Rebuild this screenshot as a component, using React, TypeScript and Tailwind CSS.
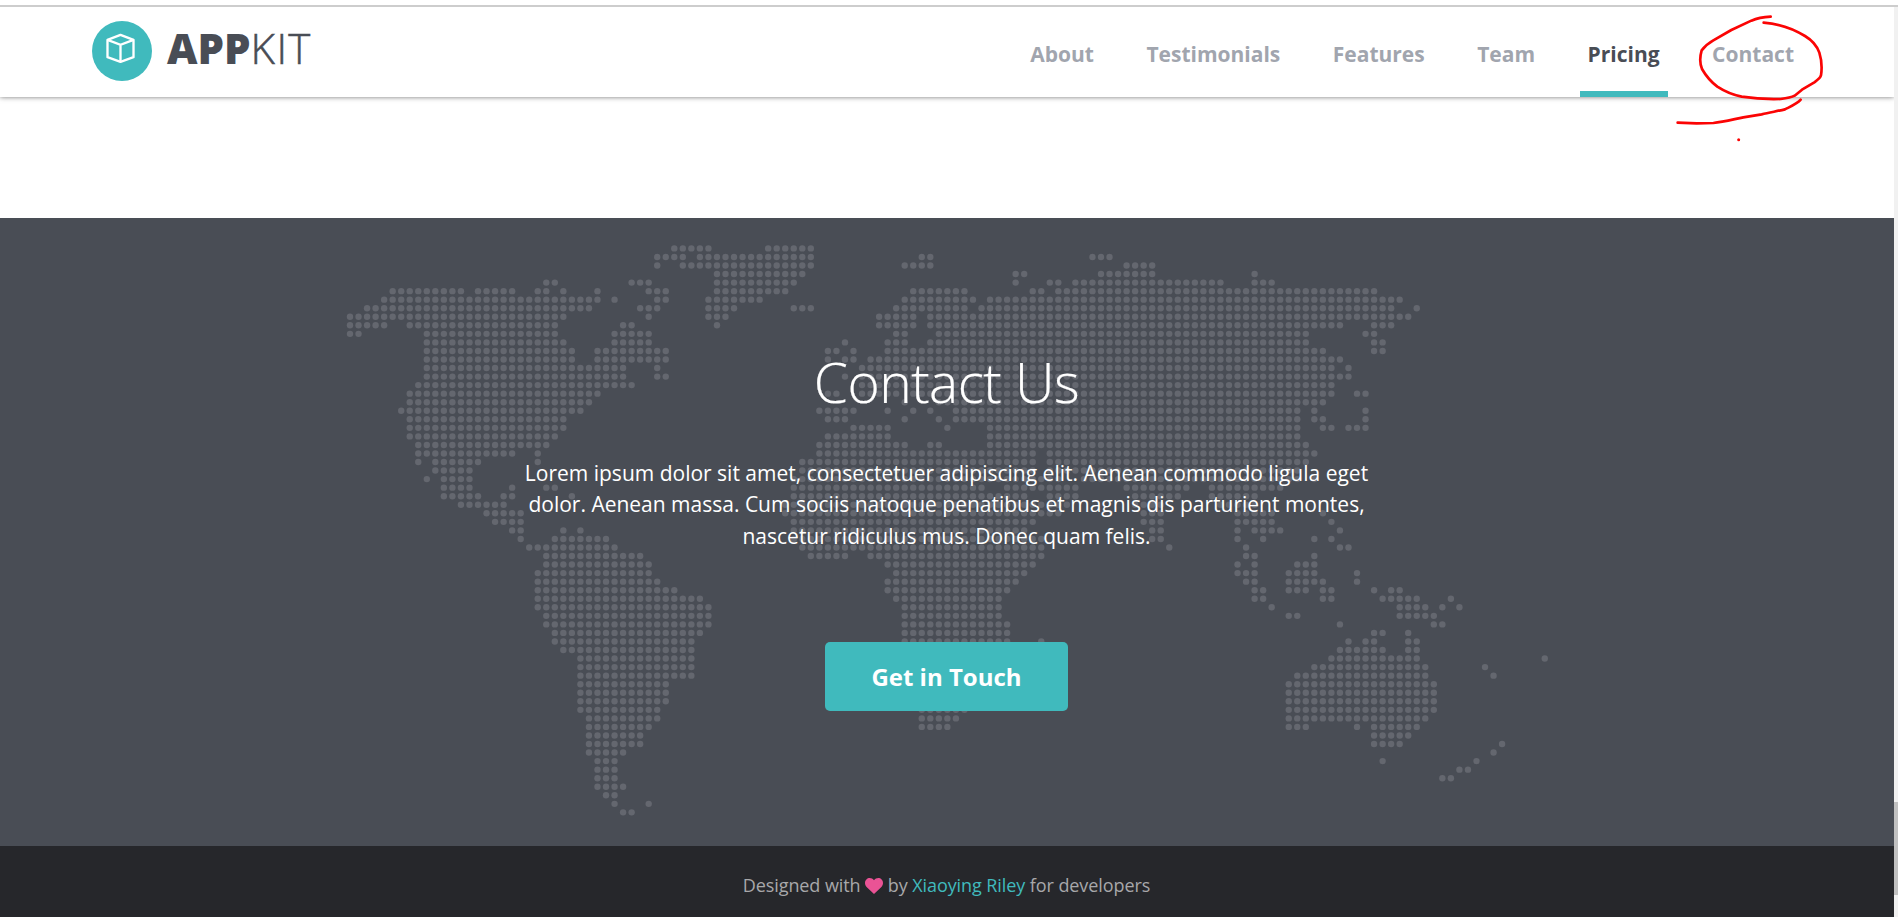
import React from "react";

const MAP_ROWS = [
  "38-42,49-54",
  "36-39,41-54,67-68,87-89",
  "36,39-54,65-68,91-94",
  "43-53,78-79,88-94,106",
  "23-24,33-35,43-52,78,82-83,85-102,106-108",
  "5-13,15-19,22-23,25,29,35-37,43-51,66-72,80-81,83-120",
  "4-29,31,36-37,42-48,65-73,75-123",
  "2-28,34-36,42-45,52-54,64-72,74-122,125",
  "0-25,35,42-44,62-66,68-124",
  "0-4,7-24,32-33,43,62-66,68-116,120-122",
  "0-1,9-24,31-35,64-65,69-112,119-120",
  "9-25,31-35,58,63-65,68-112,120-121",
  "9-26,29-37,56-57,59,63-114,120-121",
  "9-26,29-37,56,58-59,61-116",
  "9-32,36,60-115,117",
  "9-32,36-37,58,60-117",
  "8-33,60-115",
  "7-29,56-57,60-64,66-115,118-119",
  "7-28,65,69-114",
  "6-27,55-59,63,66,68,71-111,113,119",
  "7-25,56-58,65,69,71-111,113-114,119",
  "7-25,59-63,70,75-111,114-115,117-119",
  "7-24,56-63,75-111",
  "8-23,55-65,68-69,75-112",
  "8-19,22,55-80,82-113",
  "8,10-15,22,53-80,82-112",
  "10-14,53-80,82-111",
  "9,11-14,52-83,86-111,113",
  "11-14,19,23-24,52-74,77-85,91-98,101-109",
  "11-15,18-19,26,52-79,82-85,92-97,101-106",
  "13-18,51-84,92-95,102-106",
  "16-20,51-83,93-95,104-108,114",
  "17-20,52-80,93-95,104-108,115",
  "19-20,25,27,52-79,94-95,104,106-109,116",
  "20,24-30,52-81,94-95,104,107,113,115",
  "21-31,53-81,96,105,116-117",
  "23-34,54-58,61-81,105-106,113",
  "23-35,63-80,104,106,111-113",
  "22-35,64-79,104-106,110-113,118",
  "22-36,63-78,105-106,110-114,118",
  "22-38,63-77,106-107,110-112,114-115,120,122-123",
  "22-41,64-76,106-107,114-115,121-125,129",
  "22-42,65-76,108,123-126,128,130",
  "23-42,65-76,110-111,123-127",
  "23-42,65-77,116,127-128",
  "24-41,65-77,120-121,124",
  "24-40,65-77,81,117,119-120,124-125",
  "25-40,65-77,116-121,124-125",
  "27-40,66-76,115-125,140",
  "27-40,66-75,113-126,133",
  "27-40,66-75,111-126,134",
  "27-37,66-74,110-127",
  "27-37,66-74,110-127",
  "27-37,67-73,110-127",
  "27-36,67-72,110-127",
  "28-36,67-71,110-126",
  "28-35,67-70,110-112,118,120-125",
  "28-34,120-124",
  "28-34,120-123,135",
  "28-32,134",
  "29-31,121,132",
  "29-31,130-131",
  "29-31,128-129",
  "29-32",
  "30-31",
  "31,35",
  "32-33",
];

const dots = MAP_ROWS.flatMap((row, r) =>
  row.split(",").flatMap((span) => {
    const [from, to = from] = span.split("-").map(Number);
    return Array.from({ length: to - from + 1 }, (_, i) => ({ c: from + i, r }));
  }),
);

function WorldMap() {
  return (
    <svg
      viewBox="0 0 1894 628"
      className="col-start-1 row-start-1 h-[628px] w-[1894px]"
      fill="#64676f"
      aria-hidden="true"
    >
      {dots.map(({ c, r }) => (
        <circle key={`${c}-${r}`} cx={350 + c * 8.534} cy={30.4 + r * 8.545} r="3.2" />
      ))}
    </svg>
  );
}

function Logo() {
  return (
    <a className="flex items-start gap-[15px] text-[#494d55]">
      <span className="flex size-[60px] justify-center rounded-full bg-[#40babd]">
        <svg viewBox="0 0 90 90" className="mt-[10.5px] -ml-[3px] size-[33px]" fill="none" stroke="#fff" strokeWidth="7">
          <g transform="translate(45 45) scale(.91) translate(-45 -45)">
            <path d="M45 4 84 19V71L45 85 6 71V19Z" strokeLinejoin="round" />
            <path d="M6 19 45 34 84 19M45 34V85" />
          </g>
        </svg>
      </span>
      <span className="-mt-px text-[42px] leading-[56px]">
        <span className="font-extrabold">APP</span>
        <span className="font-light tracking-[1.4px] [-webkit-text-stroke:0.5px_#494d55]">KIT</span>
      </span>
    </a>
  );
}

const NAV = ["About", "Testimonials", "Features", "Team", "Pricing", "Contact"];

function Header() {
  return (
    <header className="relative flex h-[90px] justify-between bg-white pr-[92px] pl-[92px] shadow-[0_0_5px_rgba(0,0,0,0.55)]">
      <div className="pt-[14px]">
        <Logo />
      </div>
      <nav className="flex gap-[36.5px] text-[21px] font-bold">
        {NAV.map((item) => (
          <a
            key={item}
            className={
              item === "Pricing"
                ? "border-b-6 border-[#40babd] px-2 pt-[32px] leading-[30px] text-[#494d55]"
                : "px-2 pt-[32px] leading-[30px] text-[#a1a5ae]"
            }
          >
            {item}
          </a>
        ))}
      </nav>
    </header>
  );
}

function Contact() {
  return (
    <section className="grid h-[628px] overflow-hidden bg-[#494d55]">
      <WorldMap />
      <div className="z-10 col-start-1 row-start-1 flex flex-col items-center pr-px text-center text-white">
        <h2 className="mt-[126px] text-[55px] leading-[76px] font-light tracking-[-0.5px] [-webkit-text-stroke:0.2px_#fff]">
          Contact Us
        </h2>
        <p className="mt-[38px] text-[21px] leading-[31.4px] whitespace-nowrap">
          Lorem ipsum dolor sit amet, consectetuer adipiscing elit. Aenean commodo ligula eget
          <br />
          dolor. Aenean massa. Cum sociis natoque penatibus et magnis dis parturient montes,
          <br />
          nascetur ridiculus mus. Donec quam felis.
        </p>
        <button className="mt-[90px] h-[69px] w-[243px] rounded-[5px] bg-[#40babd] pt-px text-[24px] font-bold">
          Get in Touch
        </button>
      </div>
    </section>
  );
}

function Footer() {
  return (
    <footer className="flex h-[71px] items-start justify-center bg-[#26272b] pt-[25px] pr-px text-[18px] leading-[28px] tracking-[-0.08px] whitespace-pre text-[#a8a8aa]">
      <span>Designed with </span>
      <svg viewBox="0 0 18 16" className="mt-[7px] h-[16px] w-[18px]" fill="#ea5395">
        <path d="M9 16 1.6 8.9C-.6 6.600-.4 3.200 1.400 1.400 3.500-.6 7-.4 9 2.300 11-.4 14.500-.6 16.600 1.400c1.800 1.800 2 5.200-.2 7.500Z" />
      </svg>
      <span> by </span>
      <a className="text-[#40babd]">Xiaoying Riley</a>
      <span> for developers</span>
    </footer>
  );
}

function PenMarks() {
  return (
    <svg
      viewBox="0 0 1074 450"
      className="pointer-events-none absolute top-0 left-[1540px] z-20 h-[150px] w-[358px]"
      fill="none"
      stroke="#fb0404"
      strokeWidth="8"
      strokeLinecap="round"
      strokeLinejoin="round"
    >
      <path d="M692 50C670 51 650 55 634 62L574 90 520 121C504 130 494 139 485 151 480 168 479 190 486 207 498 228 515 247 532 260 555 275 580 285 605 290 650 297 690 298 722 297 740 295 755 292 764 287L786 269 823 247C833 240 841 235 843 226 847 200 845 180 838 158 830 135 815 120 795 108 755 83 715 71 671 68" />
      <path d="M413 368 470 370 520 369C550 366 580 358 610 352L665 343C690 337 715 333 735 328 755 318 772 311 782 299" />
      <circle cx="596" cy="419" r="4.500" fill="#fb0404" stroke="none" />
    </svg>
  );
}

export default function App() {
  return (
    <div className="relative flex h-[917px] w-[1898px] flex-col overflow-hidden bg-white font-['Open_Sans',sans-serif]">
      <div className="h-[7px] shrink-0 border-b-2 border-[#cdcdcd]" />
      <div className="flex min-h-0 flex-1">
        <main className="flex w-[1894px] flex-col overflow-hidden">
          <Header />
          <div className="h-[121px]" />
          <Contact />
          <Footer />
        </main>
        <div className="w-1 bg-[#f1f1f1] pt-[795px]">
          <div className="h-[93px] bg-[#c1c1c1]" />
        </div>
      </div>
      <PenMarks />
    </div>
  );
}
